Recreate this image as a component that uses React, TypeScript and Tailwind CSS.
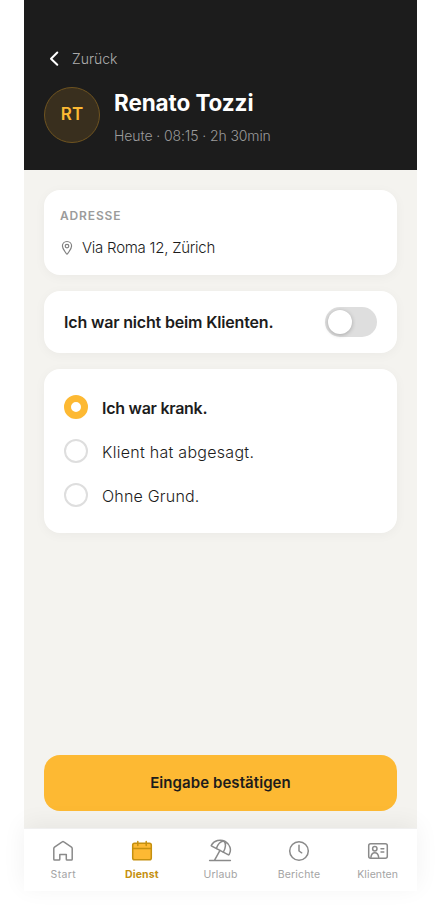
import type { ReactNode } from "react";

interface ReasonProps {
  label: string;
  selected?: boolean;
  tracking: string;
}

interface NavItem {
  label: string;
  icon: ReactNode;
  active?: boolean;
  tracking: string;
}

const stroke = {
  fill: "none",
  stroke: "currentColor",
  strokeWidth: 1.5,
  strokeLinecap: "round",
  strokeLinejoin: "round",
} as const;

const navItems: NavItem[] = [
  {
    label: "Start",
    tracking: "tracking-[0.35px]",
    icon: (
      <svg className="size-6" viewBox="0 0 24 24" {...stroke}>
        <path d="M2.8 9.6Q2.8 8.7 3.5 8.1L11.2 2.8Q12 2.2 12.8 2.8L20.5 8.1Q21.2 8.7 21.2 9.6V20.2Q21.2 21 20.4 21H16.1Q15.3 21 15.3 20.2V15.5H8.8V20.2Q8.8 21 8 21H3.6Q2.8 21 2.8 20.2Z" />
      </svg>
    ),
  },
  {
    label: "Dienst",
    tracking: "tracking-[0.1px]",
    active: true,
    icon: (
      <svg className="size-6" viewBox="0 0 24 24" {...stroke}>
        <rect x="2.7" y="4.3" width="18.6" height="16.4" rx="1.8" fill="#fdb933" />
        <path d="M2.7 9.5H21.3M7.8 2.5V6.5M16.2 2.5V6.5" />
      </svg>
    ),
  },
  {
    label: "Urlaub",
    tracking: "tracking-[0.2px]",
    icon: (
      <svg className="size-6" viewBox="0 0 24 24" {...stroke}>
        <path d="M1.6 21.4H22.4M6.6 21.2L12 11.4" />
        <path d="M3.4 6.2C6.2 1.4 12.4-.2 17.2 2.5S23.8 11 21.2 15.4Q20.9 16.2 20 15.7L3.8 7.1Q3 6.8 3.4 6.2Z" />
        <path d="M15.6 1.9C12.8 2.3 9.8 5 8.4 9.4M15.6 1.9C18.4 4 17.8 9.2 15.3 13.1" />
      </svg>
    ),
  },
  {
    label: "Berichte",
    tracking: "tracking-[0.15px]",
    icon: (
      <svg className="size-6" viewBox="0 0 24 24" {...stroke}>
        <circle cx="12" cy="12" r="9.3" />
        <path d="M12 6.3V12L14.7 13.8" />
      </svg>
    ),
  },
  {
    label: "Klienten",
    tracking: "tracking-[0.1px]",
    icon: (
      <svg className="size-6" viewBox="0 0 24 24" {...stroke}>
        <rect x="2.7" y="4.7" width="18.6" height="14.6" rx="2" />
        <circle cx="8.8" cy="9.8" r="2.2" />
        <path d="M4.9 18.3C5.3 15.2 6.8 13.7 8.8 13.7S12.3 15.2 12.7 18.3M15 9.7H17.8M15 13H17.8" />
      </svg>
    ),
  },
];

function Reason({ label, selected = false, tracking }: ReasonProps) {
  return (
    <div className="flex h-6 items-center gap-3.5">
      <span
        className={`size-6 shrink-0 rounded-full bg-white ${
          selected ? "border-[7px] border-[#fdb933]" : "border-2 border-[#dedede]"
        }`}
      />
      <span
        className={`mt-px whitespace-nowrap text-base leading-6 text-[#1c1c1c] ${tracking} ${
          selected ? "font-semibold" : "font-light"
        }`}
      >
        {label}
      </span>
    </div>
  );
}

export default function App() {
  return (
    <div className="h-[911px] w-[441px] overflow-hidden bg-white px-6 font-['Inter',sans-serif]">
      <div className="flex h-[891px] w-[393px] flex-col bg-[#f4f3ef]">
        <header className="h-[170px] shrink-0 bg-[#1c1c1c] px-5 pt-[49px]">
          <div className="flex h-5 items-center">
            <svg
              className="h-5 w-5"
              viewBox="0 0 20 20"
              fill="none"
              stroke="#fff"
              strokeWidth="2"
              strokeLinecap="round"
              strokeLinejoin="round"
            >
              <path d="M13.3 3.5L7 9.7L13.3 15.8" />
            </svg>
            <span className="ml-2 text-[14px] font-light leading-5 tracking-[0px] text-[#adadad]">Zurück</span>
          </div>
          <div className="mt-[18px] flex items-start gap-3.5">
            <div className="flex size-14 items-center justify-center rounded-full border-[1.5px] border-[#6f5420] bg-[#392f1e] text-[17px] font-semibold text-[#fdb933]">
              RT
            </div>
            <div className="mt-px whitespace-nowrap">
              <h1 className="text-[22.5px] font-bold leading-[30px] tracking-[-0.1px] text-white">Renato Tozzi</h1>
              <p className="mt-[8px] text-[14px] font-light leading-5 tracking-[-0.1px] text-[#9b9b9b]">
                Heute · 08:15 · 2h 30min
              </p>
            </div>
          </div>
        </header>

        <main className="flex flex-1 flex-col gap-4 px-5 pt-5 pb-[17px]">
          <section className="h-[85px] rounded-2xl bg-white px-4 pt-[18px] shadow-[0_2px_12px_rgba(0,0,0,0.04)]">
            <h2 className="text-[12px] font-semibold leading-4 tracking-[0.85px] text-[#9b9b9b]">ADRESSE</h2>
            <div className="mt-[14px] flex h-5 items-center gap-2">
              <svg className="-mt-px h-4 w-3.5" viewBox="0 0 14 16" fill="none" stroke="#808080" strokeWidth="1.2">
                <path d="M7 1.5C4.2 1.5 2.4 3.6 2.4 6.1C2.4 8.9 5 11.5 6.4 13.7Q7 14.6 7.6 13.7C9 11.5 11.6 8.9 11.6 6.1C11.6 3.6 9.8 1.5 7 1.5Z" />
                <circle cx="7" cy="6.1" r="1.8" />
              </svg>
              <span className="text-[15px] font-light leading-5 tracking-[-0.25px] text-[#1c1c1c]">
                Via Roma 12, Zürich
              </span>
            </div>
          </section>

          <section className="flex h-[62px] items-center justify-between rounded-2xl bg-white px-5 shadow-[0_2px_12px_rgba(0,0,0,0.04)]">
            <span className="whitespace-nowrap text-base font-semibold tracking-[-0.17px] text-[#1c1c1c]">
              Ich war nicht beim Klienten.
            </span>
            <button
              type="button"
              role="switch"
              aria-checked="false"
              className="flex h-[30px] w-[52px] items-center rounded-full bg-[#dedede] p-[3px]"
            >
              <span className="size-6 rounded-full bg-white shadow-[0_1px_4px_rgba(0,0,0,0.25)]" />
            </button>
          </section>

          <section className="flex h-[164px] flex-col gap-5 rounded-2xl bg-white px-5 pt-[26px] shadow-[0_2px_12px_rgba(0,0,0,0.04)]">
            <Reason label="Ich war krank." selected tracking="tracking-[-0.27px]" />
            <Reason label="Klient hat abgesagt." tracking="tracking-[0.28px]" />
            <Reason label="Ohne Grund." tracking="tracking-[0.2px]" />
          </section>

          <button
            type="button"
            className="mt-auto h-14 rounded-2xl bg-[#fdb933] pt-px text-[15px] font-semibold tracking-[0.07px] text-[#1c1c1c]"
          >
            Eingabe bestätigen
          </button>
        </main>

        <nav className="flex h-[63px] shrink-0 border-t border-[#f0f0f0] bg-white shadow-[0_-4px_24px_rgba(0,0,0,0.06)]">
          {navItems.map((item) => (
            <div
              key={item.label}
              className={`flex flex-1 flex-col items-center pt-[10px] ${
                item.active ? "text-[#c5900f]" : "text-[#8a8a8a]"
              }`}
            >
              {item.icon}
              <span
                className={`mt-[6px] text-[10.5px] leading-3 ${item.tracking} ${
                  item.active ? "font-bold" : "font-normal text-[#a4a4a4]"
                }`}
              >
                {item.label}
              </span>
            </div>
          ))}
        </nav>
      </div>
    </div>
  );
}
